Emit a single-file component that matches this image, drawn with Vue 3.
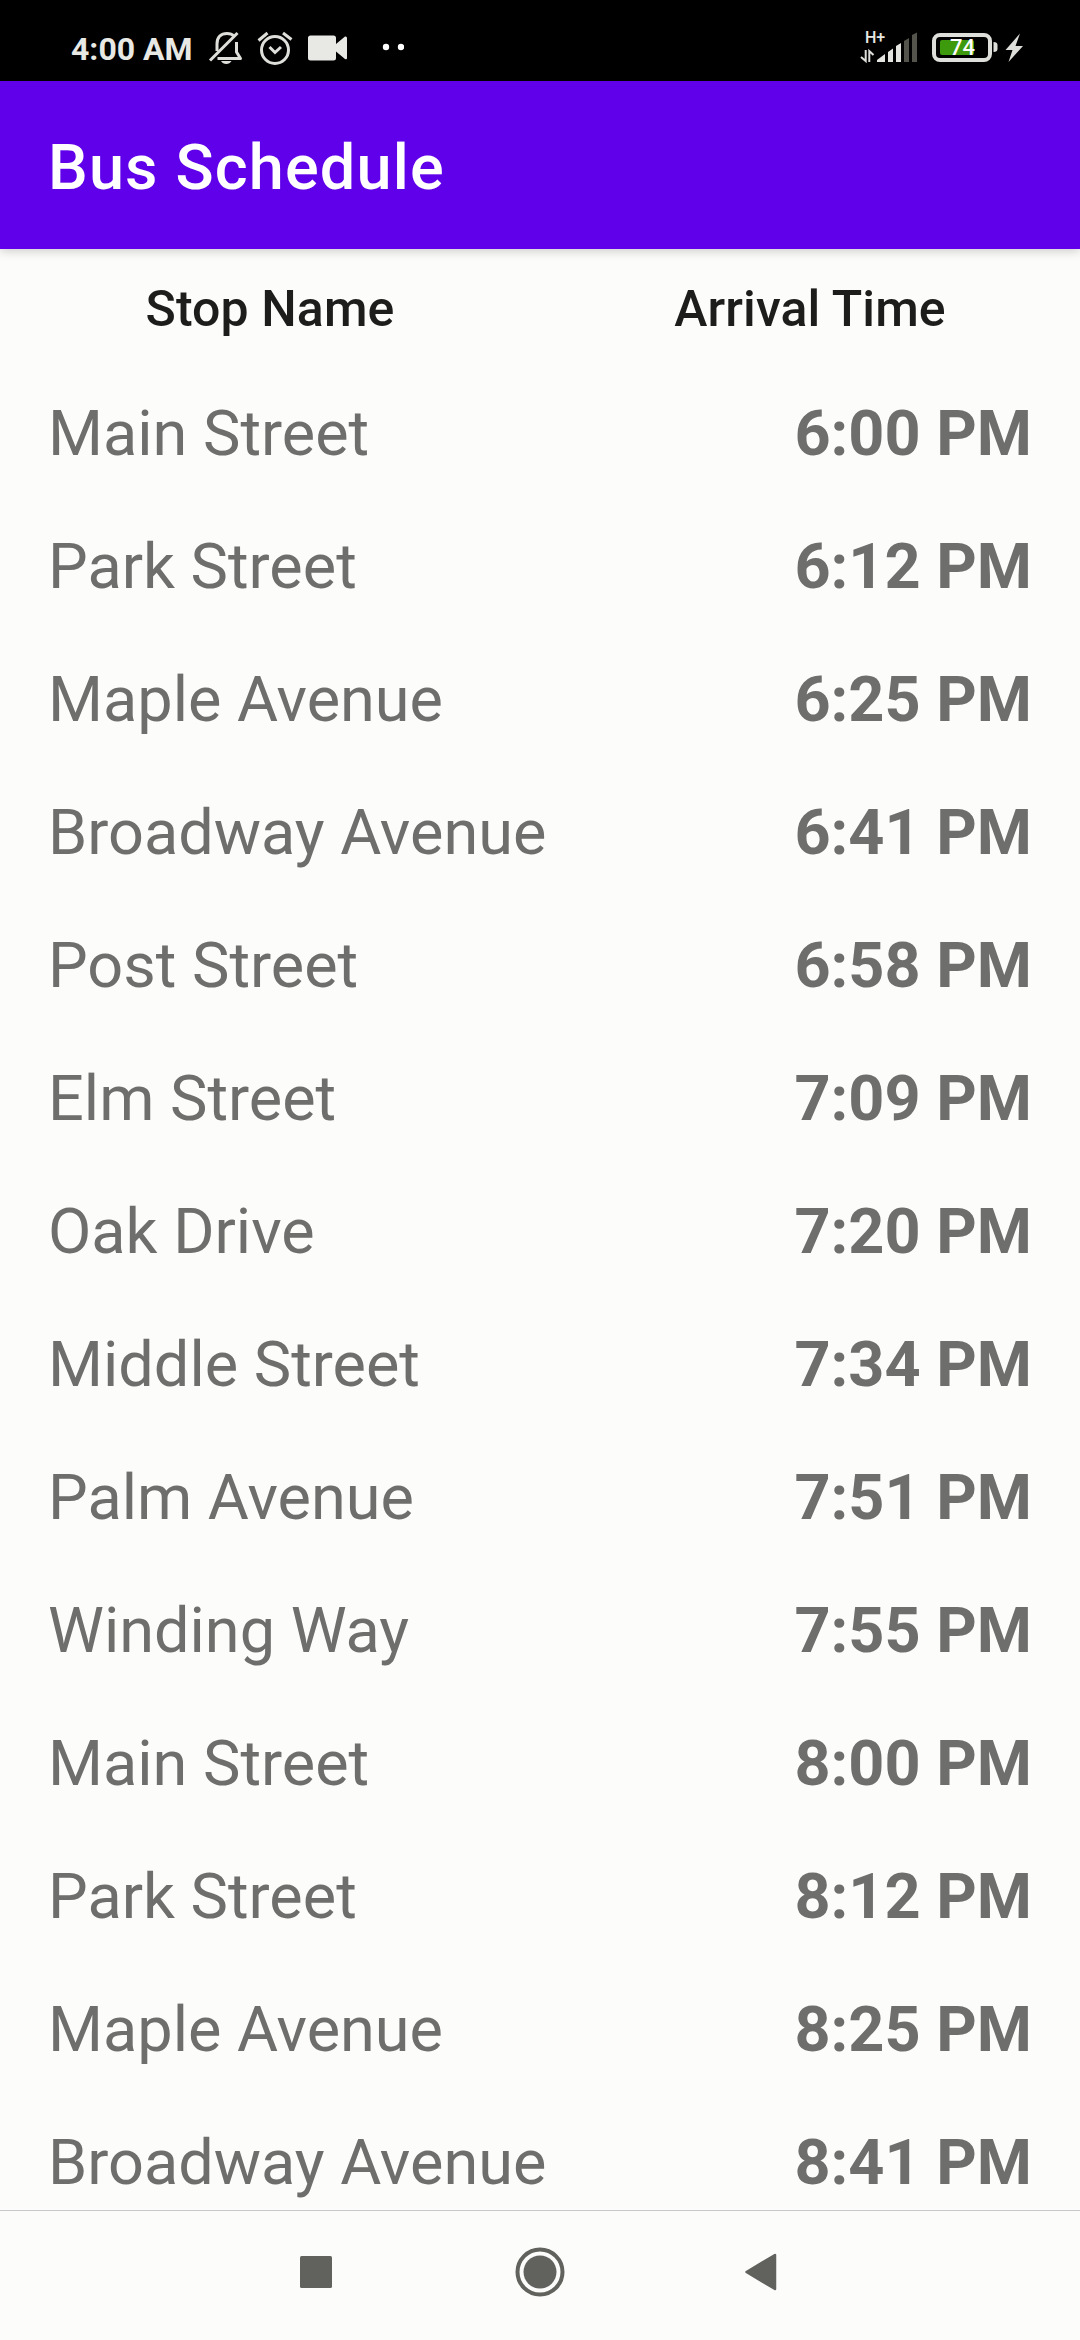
<script setup>
const stops = [
  ['Main Street', '6:00 PM'],
  ['Park Street', '6:12 PM'],
  ['Maple Avenue', '6:25 PM'],
  ['Broadway Avenue', '6:41 PM'],
  ['Post Street', '6:58 PM'],
  ['Elm Street', '7:09 PM'],
  ['Oak Drive', '7:20 PM'],
  ['Middle Street', '7:34 PM'],
  ['Palm Avenue', '7:51 PM'],
  ['Winding Way', '7:55 PM'],
  ['Main Street', '8:00 PM'],
  ['Park Street', '8:12 PM'],
  ['Maple Avenue', '8:25 PM'],
  ['Broadway Avenue', '8:41 PM'],
]
</script>

<template>
  <div class="screen">
    <div class="status">
      <span class="clock">4:00 AM</span>
      <svg class="left-icons" width="200" height="81" viewBox="204 0 200 81">
        <!-- muted bell -->
        <g fill="none" stroke="#dededa" stroke-width="3">
          <path d="M217 51V44C217 37 221 33.5 227 33.5C230 33.5 232.500 34.500 234 36" />
          <path d="M236.500 42V52L240.500 58.500H217.500" stroke-linejoin="round" />
          <path d="M210 60.500L237.500 33" />
        </g>
        <path d="M221 61H231.500C230.500 63 228.500 64 226.300 64C224 64 222 63 221 61Z" fill="#dededa" />
        <!-- alarm -->
        <g fill="none" stroke="#dededa" stroke-width="3">
          <circle cx="275" cy="50" r="13.500" />
          <path d="M269.500 47L275 52.500L281 47" />
          <path d="M258.500 40.500L267.500 33M283 33L291.500 39.500" />
        </g>
        <!-- camera -->
        <path d="M310 35.500H333.500Q336 35.500 336 38V44L345 36.500Q347 36 347 38V58Q347 60 345 59L336 51.500V58Q336 60.500 333.500 60.500H310.500Q308 60.500 308 58V38Q308 35.500 310.500 35.500Z" fill="#e8e8e4" />
        <circle cx="386" cy="47" r="3.200" fill="#fff" />
        <circle cx="401" cy="47" r="3.200" fill="#fff" />
      </svg>
      <div class="network">
        <span class="net-type">H+</span>
        <svg width="60" height="14" viewBox="860 49 60 14" overflow="visible">
          <path d="M865.700 50V61L861 57M869.300 62V51L873.500 55" fill="none" stroke="#dededa" stroke-width="2" />
          <g fill="#e4e4e0">
            <path d="M877 62V60L885 54V62ZM888 62V52L893 48.500V62ZM896 62V46L901 43V62Z" />
            <path d="M904 62V41L909 38V62ZM912 62V35L917 32.500V62Z" fill="#54544c" />
          </g>
        </svg>
      </div>
      <div class="battery">
        <div class="level"></div>
        <span class="percent">74</span>
      </div>
      <svg class="power" width="32" height="81" viewBox="992 0 32 81">
        <path d="M993.500 42Q997.500 42 997.500 45V49Q997.500 52 993.500 52Z" fill="#dededa" />
        <path d="M1020 33.500L1005.500 50H1012.500L1008.500 62L1023 46H1015.500Z" fill="#dededa" />
      </svg>
    </div>

    <header class="appbar">Bus Schedule</header>

    <main class="content">
      <div class="heads">
        <span>Stop Name</span>
        <span>Arrival Time</span>
      </div>
      <div v-for="([name, time], i) in stops" :key="i" class="row">
        <span>{{ name }}</span>
        <b>{{ time }}</b>
      </div>
    </main>

    <nav class="navbar">
      <svg width="50" height="50" viewBox="-25 -25 50 50">
        <rect x="-16" y="-16" width="32" height="32" rx="1.500" />
      </svg>
      <svg width="50" height="50" viewBox="-25 -25 50 50">
        <circle r="22.500" fill="none" stroke="#61615d" stroke-width="4" />
        <circle r="16.500" />
      </svg>
      <svg width="50" height="50" viewBox="-25 -25 50 50">
        <path d="M-17.500 0L11 -17V17Z" stroke="#61615d" stroke-width="2.500" stroke-linejoin="round" />
      </svg>
    </nav>
  </div>
</template>

<style>
body {
  margin: 0;
}
</style>

<style scoped>
.screen {
  width: 1080px;
  height: 2340px;
  display: flex;
  flex-direction: column;
  overflow: hidden;
  background: #fcfdfb;
  font-family: Roboto, sans-serif;
}
.status {
  height: 81px;
  flex: none;
  display: flex;
  background: #000;
  color: #e8e8e4;
}
.status svg {
  display: block;
  flex: none;
}
.clock {
  width: 133px;
  padding-left: 71px;
  font-size: 32px;
  font-weight: 700;
  line-height: 38px;
  margin-top: 30px;
  white-space: nowrap;
}
.left-icons {
  margin-right: 456px;
}
.network {
  width: 60px;
  margin-right: 12px;
  padding-top: 28px;
}
.net-type {
  display: block;
  height: 21px;
  padding-left: 5px;
  font-size: 16px;
  line-height: 19px;
  font-weight: 500;
}
.battery {
  box-sizing: border-box;
  width: 60px;
  height: 29px;
  margin-top: 33px;
  border: 4px solid #dededa;
  border-radius: 8px;
  display: grid;
  align-items: center;
}
.level {
  grid-area: 1 / 1;
  width: 34px;
  height: 15px;
  margin-left: 4px;
  border-radius: 2px;
  background: #3c9a0c;
}
.percent {
  grid-area: 1 / 1;
  padding-left: 14px;
  color: #fff;
  font-size: 22px;
  line-height: 21px;
  font-weight: 500;
}
.appbar {
  height: 168px;
  flex: none;
  box-sizing: border-box;
  padding: 4px 48px 0;
  line-height: 165px;
  background: #6000ea;
  color: #fff;
  font-size: 63px;
  font-weight: 500;
  letter-spacing: 1.15px;
  box-shadow: 0 2px 10px rgba(0, 0, 0, 0.2);
  position: relative;
}
.content {
  flex: 1;
  min-height: 0;
}
.heads {
  display: grid;
  grid-template-columns: 1fr 1fr;
  height: 118px;
  line-height: 121px;
  text-align: center;
  color: #1d1d1b;
  font-size: 50px;
  font-weight: 500;
  letter-spacing: 0.1px;
}
.row {
  display: flex;
  justify-content: space-between;
  height: 133px;
  padding: 0 48px;
  line-height: 133px;
  font-size: 63px;
  color: #6e6e6c;
}
.row b {
  font-weight: 700;
}
.navbar {
  box-sizing: border-box;
  height: 130px;
  flex: none;
  border-top: 1px solid #c8c8cb;
  padding: 36px 291px 0;
  display: flex;
  justify-content: space-between;
  fill: #61615d;
}
</style>
